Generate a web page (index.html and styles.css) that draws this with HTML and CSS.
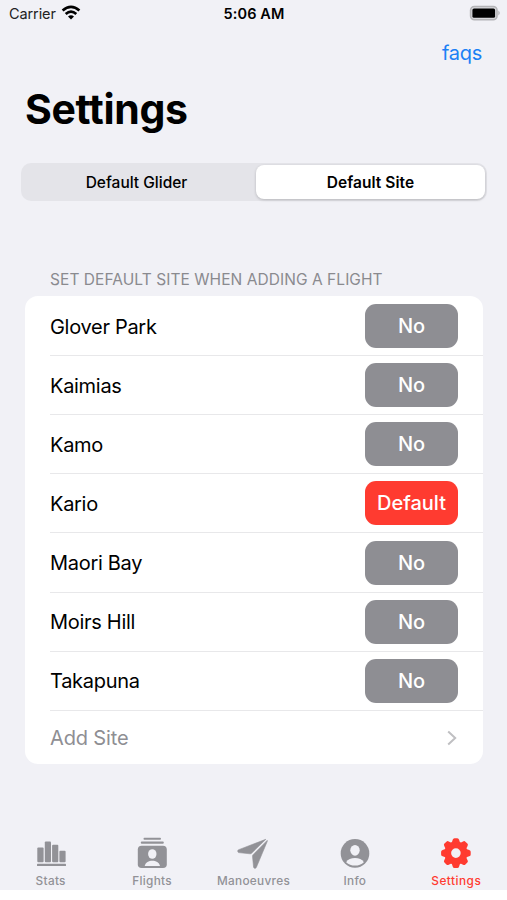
FILE: index.html
```html
<!DOCTYPE html>
<html lang="en">
<head>
<meta charset="utf-8">
<title>Settings</title>
<link rel="stylesheet" href="styles.css">
</head>
<body>
<div class="screen">
  <header class="status">
    <div class="carrier"><span>Carrier</span>
      <svg width="20" height="15" viewBox="0 0 20 15"><g fill="none" stroke="#000" stroke-width="2.7"><path d="M1.6 5.4Q10 -1.8 18.4 5.4"/><path d="M4.7 8.9Q10 4.3 15.3 8.9"/></g><path d="M7 11.4Q10 9 13 11.4L10 14.4Z"/></svg>
    </div>
    <div class="time">5:06 AM</div>
    <svg class="battery" width="32" height="16" viewBox="0 0 32 16"><rect x="1.6" y="1.5" width="26.4" height="13.2" rx="3.8" fill="#d8d8dc" stroke="#b4b4b7" stroke-width="1.6"/><rect x="3.4" y="3.5" width="22.7" height="9.3" rx="1.6"/><path d="M29.4 5.6Q32 8 29.4 10.5Z" fill="#adadb0"/></svg>
  </header>
  <nav class="navbar"><a class="faqs">faqs</a></nav>
  <h1>Settings</h1>
  <div class="segments"><div class="segment">Default Glider</div><div class="segment selected">Default Site</div></div>
  <h2>SET DEFAULT SITE WHEN ADDING A FLIGHT</h2>
  <main class="list">
    <div class="row"><span>Glover Park</span><button>No</button></div>
    <div class="row"><span>Kaimias</span><button>No</button></div>
    <div class="row"><span>Kamo</span><button>No</button></div>
    <div class="row"><span>Kario</span><button class="default">Default</button></div>
    <div class="row"><span>Maori Bay</span><button>No</button></div>
    <div class="row"><span>Moirs Hill</span><button>No</button></div>
    <div class="row"><span>Takapuna</span><button>No</button></div>
    <div class="row add"><span>Add Site</span><svg width="12" height="18" viewBox="0 0 12 18"><path d="M2.2 2.4L9.2 9L2.2 15.6" fill="none" stroke="#bfbfc2" stroke-width="2"/></svg></div>
  </main>
  <footer class="tabs">
    <div class="tab"><svg width="36" height="36" viewBox="0 0 36 36"><rect x="4.3" y="12.6" width="6.3" height="14.6" rx="1"/><rect x="11.8" y="6.5" width="6.2" height="20.7" rx="1"/><rect x="19.1" y="9.7" width="6.2" height="17.5" rx="1"/><rect x="26.4" y="15.7" width="6.2" height="11.5" rx="1"/><rect x="4" y="28.8" width="29" height="2.3" rx=".6"/></svg><span>Stats</span></div>
    <div class="tab"><svg width="36" height="36" viewBox="0 0 36 36"><rect x="9.5" y="2.8" width="17.5" height="1.9" rx=".9"/><rect x="6.8" y="6.6" width="23" height="2.1" rx="1"/><rect x="3.8" y="10.7" width="29" height="22.4" rx="3.8"/><g fill="#f1f1f6"><ellipse cx="18.3" cy="19" rx="4.2" ry="4.8"/><path d="M10.7 30.9C11.5 27.2 14.8 25.7 18.3 25.7S25.2 27.2 26 30.9Z"/></g></svg><span>Flights</span></div>
    <div class="tab"><svg width="36" height="36" viewBox="0 0 36 36"><path d="M30.8 4.3L3.2 14.9Q2 16.2 3.5 17.6L15 18.8Q16 18.8 16.6 18.2ZM32.2 5.4L18.1 19.7Q17.4 20.4 17.5 21.3L18.6 32.4Q20 34.3 21.3 32.5L32.4 6Z" stroke="currentColor" stroke-width=".6" stroke-linejoin="round"/></svg><span>Manoeuvres</span></div>
    <div class="tab"><svg width="36" height="36" viewBox="0 0 36 36"><circle cx="18" cy="18.4" r="14.3"/><g fill="#f1f1f6"><ellipse cx="18" cy="15.3" rx="4.7" ry="5.4"/><path d="M9.1 27.2C10.8 24.5 14.2 23.1 18 23.1S25.2 24.5 26.9 27.2Q23.2 30.6 18 30.6T9.1 27.2Z"/></g></svg><span>Info</span></div>
    <div class="tab active"><svg width="36" height="36" viewBox="0 0 36 36"><defs><path id="tooth" d="M-4.4 -9.7L-3.2 -13.3Q-2.8 -14.8 -1.4 -14.8H1.4Q2.8 -14.8 3.2 -13.3L4.4 -9.7Z"/></defs><g transform="translate(17.9 18.1)"><circle r="8.2" fill="none" stroke="currentColor" stroke-width="6.8"/><use href="#tooth"/><use href="#tooth" transform="rotate(45)"/><use href="#tooth" transform="rotate(90)"/><use href="#tooth" transform="rotate(135)"/><use href="#tooth" transform="rotate(180)"/><use href="#tooth" transform="rotate(225)"/><use href="#tooth" transform="rotate(270)"/><use href="#tooth" transform="rotate(315)"/></g></svg><span>Settings</span></div>
  </footer>
</div>
</body>
</html>
```
FILE: styles.css
```css
* { box-sizing: border-box; }
body { margin: 0; background: #fff; color: #000; font-family: Inter, "Liberation Sans", sans-serif; }
.screen { height: 890px; display: flex; flex-direction: column; background: #f1f1f6; }
.status { height: 27px; display: grid; grid-template-columns: 1fr auto 1fr; align-items: center; padding: 0 6px 0 9px; font-size: 14.5px; }
.carrier { display: flex; align-items: center; gap: 5px; color: #222; }
.carrier > span { letter-spacing: -.1px; }
.carrier svg { margin-top: -2px; }
.time { font-weight: 600; letter-spacing: .1px; margin-right: 2px; }
.battery { justify-self: end; margin-top: -1px; }
.navbar { height: 52px; display: flex; justify-content: flex-end; align-items: center; padding-right: 25px; }
.faqs { color: #1a80f5; font-size: 20px; letter-spacing: -.3px; }
h1 { margin: 0 0 0 25px; height: 83.5px; line-height: 61px; font-size: 41px; font-weight: 700; letter-spacing: -.35px; }
.segments { height: 38.5px; margin: 0 20px 0 21px; padding: 2px; display: grid; grid-template-columns: 233px 1fr; border-radius: 10px; background: #e4e4e9; }
.segment { display: flex; align-items: center; justify-content: center; padding-top: 1px; font-size: 15.5px; font-weight: 500; border-radius: 8px; }
.segment:first-child { padding-right: 6px; }
.selected { background: #fff; font-weight: 600; letter-spacing: .05px; box-shadow: 0 1px 3px rgba(0,0,0,.2); }
h2 { margin: 68px 0 0 50px; height: 27px; line-height: 21px; font-size: 15.5px; font-weight: 400; letter-spacing: .06px; color: #8a8a8f; }
.list { height: 468px; margin: 0 24px 0 25px; border-radius: 13px; background: #fff; padding-left: 25px; }
.row { height: 59.1px; display: flex; align-items: center; justify-content: space-between; padding-right: 25px; font-size: 20px; letter-spacing: -.3px; border-bottom: 1.2px solid #e8e8ea; }
.row:first-child { height: 60.2px; padding-top: 2px; }
.row:first-child button { margin-top: -1px; }
.row:not(:first-child):not(.add) { padding-top: 1px; }
.row:not(:first-child) button { margin-top: -1px; }
button { width: 93px; height: 44px; padding: 0; border: 0; border-radius: 11px; background: #8e8e93; color: #fff; font: 500 20px Inter, "Liberation Sans", sans-serif; }
.default { background: #ff3b30; }
.row.add { height: 53.8px; border: 0; color: #8e8e93; letter-spacing: -.15px; }
.tabs { margin-top: auto; height: 55px; display: grid; grid-template-columns: repeat(5, 1fr); }
.tab { display: flex; flex-direction: column; align-items: center; color: #929297; font-size: 11.8px; line-height: 16px; font-weight: 500; letter-spacing: .3px; }
.tab svg { fill: currentColor; margin-bottom: 2px; }
.active { color: #ff3b30; letter-spacing: .5px; }
```
